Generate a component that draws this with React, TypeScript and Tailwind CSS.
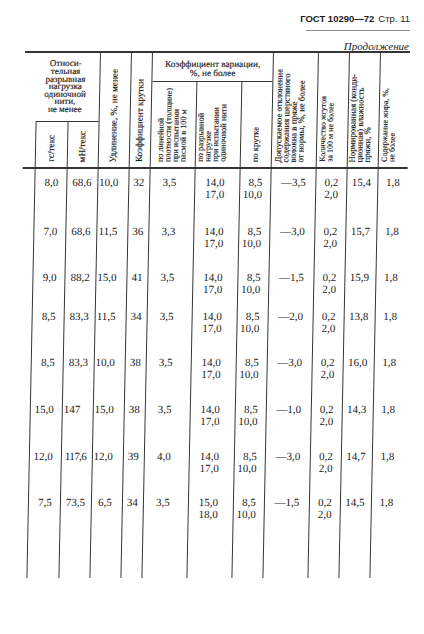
import React from 'react';

const ln = 'border-[#353535]';

const rows: string[][] = [
    ['8,0', '68,6', '10,0', '32', '3,5', '14,0|17,0', '8,5|10,0', '—3,5', '0,2|2,0', '15,4', '1,8'],
    ['7,0', '68,6', '11,5', '36', '3,3', '14,0|17,0', '8,5|10,0', '—3,0', '0,2|2,0', '15,7', '1,8'],
    ['9,0', '88,2', '15,0', '41', '3,5', '14,0|17,0', '8,5|10,0', '—1,5', '0,2|2,0', '15,9', '1,8'],
    ['8,5', '83,3', '11,5', '34', '3,5', '14,0|17,0', '8,5|10,0', '—2,0', '0,2|2,0', '13,8', '1,8'],
    ['8,5', '83,3', '10,0', '38', '3,5', '14,0|17,0', '8,5|10,0', '—3,0', '0,2|2,0', '16,0', '1,8'],
    ['15,0', '147', '15,0', '38', '3,5', '14,0|17,0', '8,5|10,0', '—1,0', '0,2|2,0', '14,3', '1,8'],
    ['12,0', '117,6', '12,0', '39', '4,0', '14,0|17,0', '8,5|10,0', '—3,0', '0,2|2,0', '14,7', '1,8'],
    ['7,5', '73,5', '6,5', '34', '3,5', '15,0|18,0', '8,5|10,0', '—1,5', '0,2|2,0', '14,5', '1,8'],
];

const rowHeights = ['h-[49px]', 'h-[46px]', 'h-[39px]', 'h-[46px]', 'h-[47px]', 'h-[47px]', 'h-[46px]', 'h-[89px]'];

const cells = [
    'w-[32px] text-right pr-[8px]',
    'w-[31px] text-left pl-[5px]',
    'w-[31px] text-right pr-[10px]',
    'w-[21px] text-left pl-[4px]',
    'w-[45px] text-center pr-[6px]',
    'w-[45px] text-center pr-[5px]',
    'w-[31px] text-right pr-[8px]',
    'w-[45px] text-center',
    'w-[31px] text-center',
    'w-[31px] text-center pr-[2px]',
    'w-[30px] text-center',
];

// a few cells sit off their column's usual place in the print
const tweaks: Record<string, string> = {
    '5-1': '!pl-[1px]',
    '6-1': '!pl-[3px] tracking-[-0.6px]',
};

// text that reads from the bottom up
const Vert = ({ lines, className = '', size = 'text-[9.2px]' }: { lines: string[]; className?: string; size?: string }) => (
    <div className={`flex h-full items-end pb-[5px] ${className}`}>
        <div className={`rotate-180 whitespace-nowrap leading-[7.5px] [writing-mode:vertical-rl] ${size}`}>
            {lines.map((l, i) => (
                <React.Fragment key={i}>
                    {i > 0 && <br />}
                    {l}
                </React.Fragment>
            ))}
        </div>
    </div>
);

export default function App() {
    return (
        <div className="h-[634px] w-[424px] overflow-hidden bg-white text-[#1c1c1c] [font-family:'Liberation_Serif',serif]">
            <div className="flex h-[30px] justify-end pt-[13px] pr-[14px] text-[9.5px] leading-[11px] [font-family:'Liberation_Sans',sans-serif]">
                <span className="font-bold">ГОСТ 10290—72</span>
                <span className="ml-[4px]">Стр. 11</span>
            </div>
            <div className="mr-[14px] ml-auto h-px w-[104px] bg-[#8a8a8a]" />
            <div className="h-[20px] pt-[9px] pr-[15px] text-right text-[11px] leading-[12px] italic">Продолжение</div>

            <div className={`ml-[25px] w-[385px] origin-top -skew-x-[1.15deg] border-t-2 ${ln}`}>
                {/* header */}
                <div className={`flex h-[116px] border-b-2 pl-[12px] ${ln} text-[#181818] [-webkit-text-stroke:0.15px]`}>
                    <div className="flex w-[63px] flex-col">
                        <div className={`flex h-[69px] items-center justify-center border-b pr-[5px] text-center text-[9px] leading-[7.6px] ${ln}`}>
                            <div>
                                Относи-<br />тельная<br />разрывная<br />нагрузка<br />одиночной<br />нити,<br />не менее
                            </div>
                        </div>
                        <div className="flex flex-1">
                            <div className={`w-[32px] border-l ${ln}`}>
                                <Vert lines={['гс/текс']} className="justify-center" />
                            </div>
                            <div className={`w-[31px] border-l ${ln}`}>
                                <Vert lines={['мН/текс']} className="justify-center" />
                            </div>
                        </div>
                    </div>
                    <div className={`w-[31px] border-l ${ln}`}>
                        <Vert lines={['Удлинение, %, не менее']} className="justify-center" />
                    </div>
                    <div className={`w-[21px] border-l ${ln}`}>
                        <Vert lines={['Коэффициент крутки']} className="justify-center" />
                    </div>
                    <div className={`flex w-[121px] flex-col border-l ${ln}`}>
                        <div className={`h-[29px] border-b pt-[7px] text-center text-[9.2px] leading-[9px] ${ln}`}>
                            Коэффициент вариации,
                            <br />
                            %, не более
                        </div>
                        <div className="flex flex-1">
                            <div className="w-[44px]">
                                <Vert
                                    lines={['по линейной', 'плотности (толщине)', 'при испытании', 'пасмой в 100 м']}
                                    className="pl-[6px]"
                                    size="text-[8.2px]"
                                />
                            </div>
                            <div className={`w-[45px] border-l ${ln}`}>
                                <Vert
                                    lines={['по разрывной', 'нагрузке', 'при испытании', 'одиночной нити']}
                                    className="pl-[1px]"
                                    size="text-[8.4px]"
                                />
                            </div>
                            <div className={`w-[31px] border-l ${ln}`}>
                                <Vert lines={['по крутке']} className="justify-center" size="text-[8.6px]" />
                            </div>
                        </div>
                    </div>
                    <div className={`w-[45px] border-l ${ln}`}>
                        <Vert
                            lines={['Допускаемое отклонение', 'содержания шерстяного', 'волокна в пряже', 'от нормы, %, не более']}
                            className="pl-[3px]"
                            size="text-[8.7px]"
                        />
                    </div>
                    <div className={`w-[31px] border-l ${ln}`}>
                        <Vert lines={['Количество жгутов', 'за 100 м не более']} className="pl-[2px]" size="text-[8px]" />
                    </div>
                    <div className={`w-[31px] border-l ${ln}`}>
                        <Vert
                            lines={['Нормированная (конди-', 'ционная) влажность', 'пряжи, %']}
                            className="pl-[1px]"
                            size="text-[8.7px]"
                        />
                    </div>
                    <div className={`w-[30px] border-l ${ln}`}>
                        <Vert lines={['Содержание жира, %,', 'не более']} className="pl-[2px]" size="text-[8px]" />
                    </div>
                </div>

                {/* body */}
                {rows.map((r, ri) => (
                    <div key={ri} className={`flex pl-[12px] ${rowHeights[ri]}`}>
                        {r.map((v, ci) => (
                            <div
                                key={ci}
                                className={`border-l pt-[8px] text-[11px] leading-[11.5px] ${ln} ${cells[ci]} ${tweaks[`${ri}-${ci}`] ?? ''}`}
                            >
                                {v.split('|').map((p, k) => (
                                    <div key={k}>{p}</div>
                                ))}
                            </div>
                        ))}
                    </div>
                ))}
            </div>
        </div>
    );
}
